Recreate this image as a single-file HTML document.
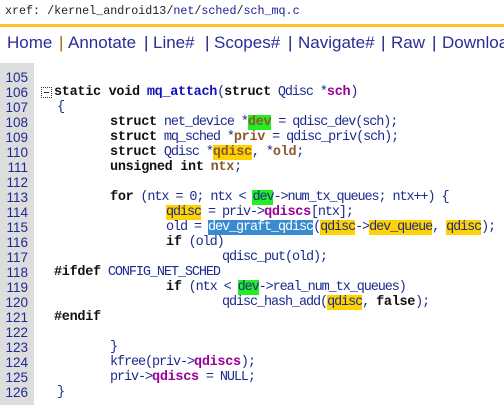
<!DOCTYPE html>
<html><head><meta charset="utf-8"><style>
body{margin:0;width:504px;height:405px;overflow:hidden;background:#fff;position:relative;font-family:"Liberation Mono",monospace}
#x{position:absolute;left:5px;top:4px;font-size:11.7px;color:#222;white-space:pre}
#x a{color:#1a1a99}
#bar{position:absolute;left:0;top:24px;width:504px;height:3px;background:#fcc22a}
.nv{position:absolute;top:33px;font-family:"Liberation Sans",sans-serif;font-size:17px;color:#2b2b99;white-space:pre}
.sp{position:absolute;top:33px;font-family:"Liberation Sans",sans-serif;font-size:17px;color:#1a1a80}
#g{position:absolute;left:0;top:63px;width:34px;height:342px;background:#ddd}
.l{position:absolute;left:0;height:15px;line-height:15px;font-size:13.5px;letter-spacing:-1.1px;white-space:pre;color:#1d2b8f}
.n{position:absolute;left:0;width:28px;text-align:right;font-family:"Liberation Sans",sans-serif;font-size:13.5px;letter-spacing:0;color:#1d2b8f}
.c{position:absolute;left:54px}
b{color:#111;letter-spacing:-0.3px}
.f{color:#1010c0;font-weight:bold;letter-spacing:-.3px}
.p{color:#990099;font-weight:bold;letter-spacing:-.3px}
.v{color:#8a5a2a;font-weight:bold;letter-spacing:-.3px}
.g{background:#22ee22}
.y{background:#ffd200}
.sel{background:#3a8ad0;color:#fff}
.box{position:absolute;left:41px;top:2px;width:9px;height:9px;border:1px dotted #333}
.box:after{content:"";position:absolute;left:2px;top:4px;width:5px;height:1px;background:#333}
</style></head><body>
<div id="x">xref: /kernel_android13/<a>net</a>/<a>sched</a>/<a>sch_mq.c</a></div>
<div id="bar"></div>
<span class="nv" style="left:7px">Home</span><span class="sp" style="left:59px;color:#b06010">|</span>
<span class="nv" style="left:68px">Annotate</span><span class="sp" style="left:144px">|</span>
<span class="nv" style="left:153px">Line#</span><span class="sp" style="left:205px">|</span>
<span class="nv" style="left:214px">Scopes#</span><span class="sp" style="left:288px">|</span>
<span class="nv" style="left:298px">Navigate#</span><span class="sp" style="left:381px">|</span>
<span class="nv" style="left:391px">Raw</span><span class="sp" style="left:432px">|</span>
<span class="nv" style="left:442px">Download</span>
<div id="g"></div>
<div class="l" style="top:70px"><span class="n">105</span></div>
<div class="l" style="top:85px"><span class="n">106</span><span class="box"></span><span class="c"><b>static void</b> <span class="f">mq_attach</span>(<b>struct</b> Qdisc *<span class="p">sch</span>)</span></div>
<div class="l" style="top:100px"><span class="n">107</span><span class="c" style="left:57px">{</span></div>
<div class="l" style="top:115px"><span class="n">108</span><span class="c">        <b>struct</b> net_device *<span class="v g">dev</span> = qdisc_dev(sch);</span></div>
<div class="l" style="top:130px"><span class="n">109</span><span class="c">        <b>struct</b> mq_sched *<span class="v">priv</span> = qdisc_priv(sch);</span></div>
<div class="l" style="top:145px"><span class="n">110</span><span class="c">        <b>struct</b> Qdisc *<span class="v y">qdisc</span>, *<span class="v">old</span>;</span></div>
<div class="l" style="top:160px"><span class="n">111</span><span class="c">        <b>unsigned int</b> <span class="v">ntx</span>;</span></div>
<div class="l" style="top:175px"><span class="n">112</span></div>
<div class="l" style="top:190px"><span class="n">113</span><span class="c">        <b>for</b> (ntx = 0; ntx &lt; <span class="g">dev</span>-&gt;num_tx_queues; ntx++) {</span></div>
<div class="l" style="top:205px"><span class="n">114</span><span class="c">                <span class="y">qdisc</span> = priv-&gt;<span class="p">qdiscs</span>[ntx];</span></div>
<div class="l" style="top:220px"><span class="n">115</span><span class="c">                old = <span class="sel">dev_graft_qdisc</span>(<span class="y">qdisc</span>-&gt;<span class="y">dev_queue</span>, <span class="y">qdisc</span>);</span></div>
<div class="l" style="top:235px"><span class="n">116</span><span class="c">                <b>if</b> (old)</span></div>
<div class="l" style="top:250px"><span class="n">117</span><span class="c">                        qdisc_put(old);</span></div>
<div class="l" style="top:265px"><span class="n">118</span><span class="c"><b>#ifdef</b> CONFIG_NET_SCHED</span></div>
<div class="l" style="top:280px"><span class="n">119</span><span class="c">                <b>if</b> (ntx &lt; <span class="g">dev</span>-&gt;real_num_tx_queues)</span></div>
<div class="l" style="top:295px"><span class="n">120</span><span class="c">                        qdisc_hash_add(<span class="y">qdisc</span>, <b>false</b>);</span></div>
<div class="l" style="top:310px"><span class="n">121</span><span class="c"><b>#endif</b></span></div>
<div class="l" style="top:325px"><span class="n">122</span></div>
<div class="l" style="top:340px"><span class="n">123</span><span class="c">        }</span></div>
<div class="l" style="top:355px"><span class="n">124</span><span class="c">        kfree(priv-&gt;<span class="p">qdiscs</span>);</span></div>
<div class="l" style="top:370px"><span class="n">125</span><span class="c">        priv-&gt;<span class="p">qdiscs</span> = NULL;</span></div>
<div class="l" style="top:385px"><span class="n">126</span><span class="c" style="left:57px">}</span></div>
</body></html>
